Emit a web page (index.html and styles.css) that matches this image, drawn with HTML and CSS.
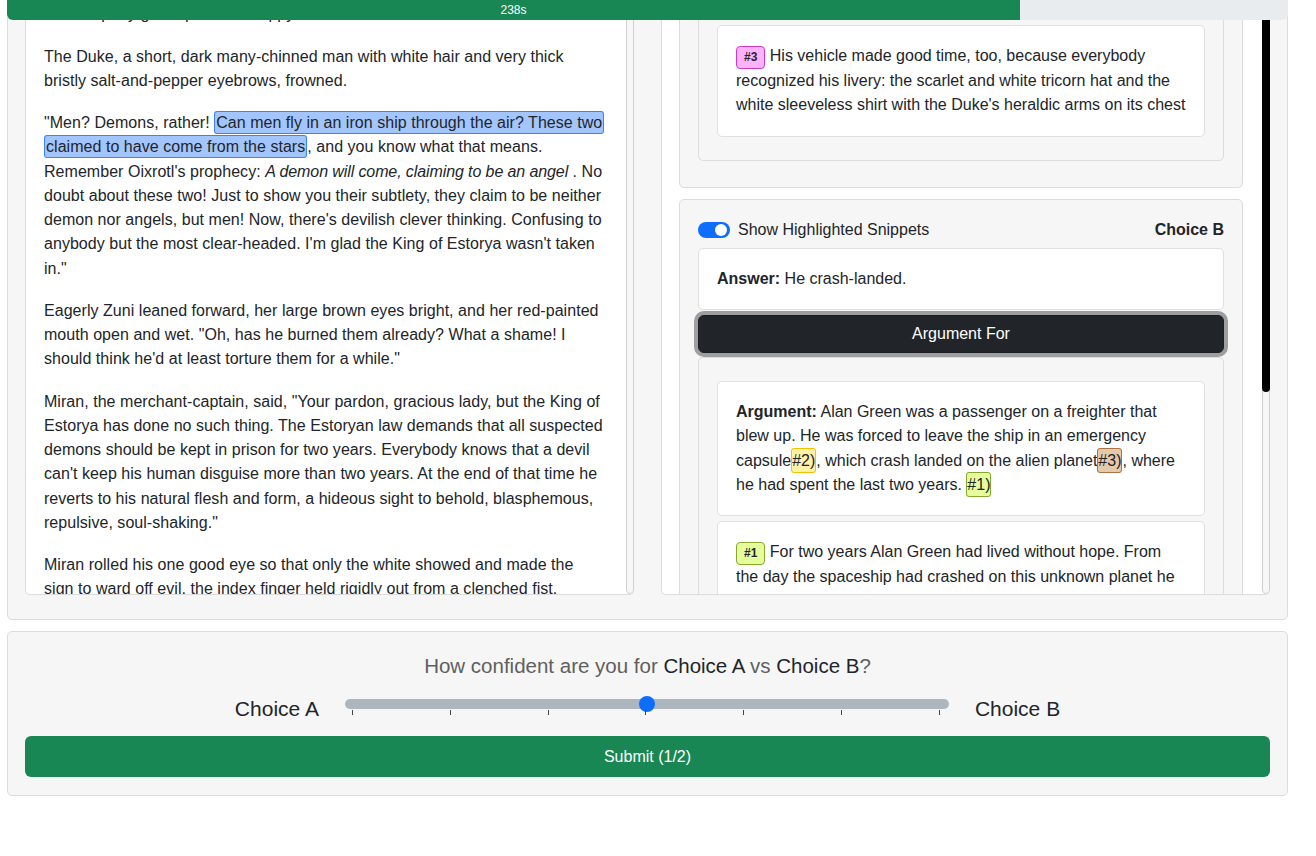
FILE: index.html
```html
<!DOCTYPE html>
<html lang="en">
<head>
  <meta charset="UTF-8">
  <meta name="viewport" content="width=device-width, initial-scale=1.0">
  <title>Debate Judging</title>
  <link rel="stylesheet" href="styles.css">
</head>
<body>

<div class="timer">
  <div class="timer-fill" style="width: 79.08%;">238s</div>
</div>

<div class="card main-card">
  <div class="panes">

    <div class="pane">
      <div class="pane-body story">
        <p>The captain bowed and told how the King kept the two strangers in prison, and the company grew quiet and happy.</p>
        <p>The Duke, a short, dark many-chinned man with white hair and very thick bristly salt-and-pepper eyebrows, frowned.</p>
        <p>"Men? Demons, rather! <span class="hl">Can men fly in an iron ship through the air? These two claimed to have come from the stars</span>, and you know what that means. Remember Oixrotl's prophecy: <i>A demon will come, claiming to be an angel</i> . No doubt about these two! Just to show you their subtlety, they claim to be neither demon nor angels, but men! Now, there's devilish clever thinking. Confusing to anybody but the most clear-headed. I'm glad the King of Estorya wasn't taken in."</p>
        <p>Eagerly Zuni leaned forward, her large brown eyes bright, and her red-painted mouth open and wet. "Oh, has he burned them already? What a shame! I should think he'd at least torture them for a while."</p>
        <p>Miran, the merchant-captain, said, "Your pardon, gracious lady, but the King of Estorya has done no such thing. The Estoryan law demands that all suspected demons should be kept in prison for two years. Everybody knows that a devil can't keep his human disguise more than two years. At the end of that time he reverts to his natural flesh and form, a hideous sight to behold, blasphemous, repulsive, soul-shaking."</p>
        <p>Miran rolled his one good eye so that only the white showed and made the sign to ward off evil, the index finger held rigidly out from a clenched fist.</p>
        <p>"And then they burn him," said the Duke with satisfaction.</p>
      </div>
      <div class="track"></div>
    </div>

    <div class="pane">
      <div class="pane-body answers">
        <div class="choice-card">
          <div class="evidence">
            <div class="box"><span class="tag tag-pink">#3</span> His vehicle made good time, too, because everybody recognized his livery: the scarlet and white tricorn hat and the white sleeveless shirt with the Duke's heraldic arms on its chest</div>
          </div>
        </div>

        <div class="choice-card">
          <div class="choice-head">
            <label class="switch"><span class="switch-input"></span>Show Highlighted Snippets</label>
            <b>Choice B</b>
          </div>
          <div class="box answer"><b>Answer:</b> He crash-landed.</div>
          <button class="btn-dark">Argument For</button>
          <div class="evidence">
            <div class="box"><b>Argument:</b> Alan Green was a passenger on a freighter that blew up. He was forced to leave the ship in an emergency capsule<span class="cite cite-yellow">#2)</span>, which crash landed on the alien planet<span class="cite cite-tan">#3)</span>, where he had spent the last two years. <span class="cite cite-lime">#1)</span></div>
            <div class="box"><span class="tag tag-lime">#1</span> For two years Alan Green had lived without hope. From the day the spaceship had crashed on this unknown planet he had only said to himself each night that rescue would come with the morning.</div>
          </div>
        </div>
      </div>
      <div class="track"><div class="thumb" style="height: 427px;"></div></div>
    </div>

  </div>
</div>

<div class="card confidence">
  <div class="question">How confident are you for <span>Choice A</span> vs <span>Choice B</span>?</div>
  <div class="slider-row">
    <span class="side">Choice A</span>
    <div class="slider">
      <input type="range" min="0" max="6" value="3">
      <div class="ticks"><i></i><i></i><i></i><i></i><i></i><i></i><i></i></div>
    </div>
    <span class="side">Choice B</span>
  </div>
  <button class="btn-submit">Submit (1/2)</button>
</div>

</body>
</html>
```

FILE: styles.css
```css
body {
  margin: 0;
  font-family: "Liberation Sans", Arial, sans-serif;
  font-size: 16px;
  line-height: 24.25px;
  color: #212529;
  background: #fff;
}
.timer {
  position: fixed;
  top: 0;
  left: 7px;
  width: 1281px;
  height: 20px;
  background: #e9ecef;
  border-radius: 0 0 6px 6px;
  overflow: hidden;
  z-index: 10;
}
.timer-fill {
  height: 100%;
  background: #198754;
  color: #fff;
  font-size: 12px;
  line-height: 20px;
  text-align: center;
}
.card {
  width: 1281px;
  margin-left: 7px;
  box-sizing: border-box;
  background: #f6f6f6;
  border: 1px solid #dcdcdc;
  border-radius: 5px;
}
.main-card {
  margin-top: -56px;
  padding: 18px 17px 24px;
}
.panes {
  display: grid;
  grid-template-columns: 1fr 1fr;
  gap: 27px;
}
.pane {
  display: flex;
  height: 630px;
  background: #fff;
  border: 1px solid #dcdcdc;
  border-right: 0;
  border-radius: 5px;
  overflow: hidden;
}
.pane-body {
  flex: 1;
  overflow: hidden;
}
.track {
  width: 8px;
  flex-shrink: 0;
  box-sizing: border-box;
  background: #f7f7f7;
  border: 1px solid #cfcfcf;
  border-radius: 4px;
}
.thumb {
  margin: 0 -1px;
  background: #000;
  border-radius: 4px;
}
.story {
  padding: 14px 20px 0 18px;
  letter-spacing: 0.04px;
}
.story p {
  margin: 0 0 18px;
}
.story i {
  letter-spacing: -0.1px;
}
.hl {
  background: #a3c5fd;
  border: 1px solid #3d82f5;
  border-radius: 3px;
  padding: 2px 1px;
  -webkit-box-decoration-break: clone;
  box-decoration-break: clone;
}
.answers {
  padding: 18px 19px 0 17px;
}
.choice-card {
  background: #f6f6f6;
  border: 1px solid #dcdcdc;
  border-radius: 5px;
  padding: 18px;
  margin-bottom: 11px;
}
.choice-head {
  display: flex;
  justify-content: space-between;
  align-items: center;
}
.switch {
  display: flex;
  align-items: center;
}
.switch-input {
  position: relative;
  width: 32px;
  height: 16px;
  margin-right: 8px;
  background: #0d6efd;
  border-radius: 8px;
}
.switch-input::after {
  content: "";
  position: absolute;
  top: 2px;
  right: 3px;
  width: 12px;
  height: 12px;
  border-radius: 50%;
  background: #fff;
}
.box {
  background: #fff;
  border: 1px solid #e0e0e0;
  border-radius: 5px;
  padding: 18px;
  margin: 5px 0;
}
.answer {
  margin: 6px 0 0;
}
.btn-dark {
  display: block;
  width: 100%;
  margin: 5px 0 4px;
  padding: 6px 12px;
  font-family: inherit;
  font-size: 16px;
  line-height: 24px;
  color: #fff;
  background: #212529;
  border: 1px solid #1a1e21;
  border-radius: 6px;
  box-shadow: 0 0 0 4px rgba(66, 70, 73, 0.5);
}
.evidence {
  margin-bottom: 8px;
  background: #f6f6f6;
  border: 1px solid #dcdcdc;
  border-radius: 5px;
  padding: 18px;
}
.tag {
  display: inline-block;
  font-size: 12px;
  font-weight: bold;
  line-height: 13px;
  padding: 4px 7px;
  border: 1px solid;
  border-radius: 4px;
}
.tag-pink { background: #fdb2fd; border-color: #cc3acc; }
.tag-lime { background: #e6fd9c; border-color: #86a82c; }
.cite {
  padding: 3px 0;
  border: 1px solid;
  border-radius: 3px;
}
.cite-yellow { background: #fff1a8; border-color: #f2c200; }
.cite-tan { background: #e6c8aa; border-color: #a8744a; }
.cite-lime { background: #e6fd9c; border-color: #86a82c; }

.confidence {
  margin-top: 11px;
  padding: 18px 17px;
}
.question {
  padding-top: 4px;
  text-align: center;
  font-size: 20.5px;
  line-height: 24px;
  color: #5f5f5f;
}
.question span {
  color: #212529;
}
.slider-row {
  display: flex;
  justify-content: center;
  align-items: center;
  gap: 26px;
  height: 34px;
  margin-top: 14px;
}
.side {
  font-size: 21px;
}
.slider {
  width: 604px;
  padding-bottom: 4px;
}
.slider input {
  -webkit-appearance: none;
  appearance: none;
  display: block;
  width: 100%;
  height: 10px;
  margin: 0;
  background: #adb5bd;
  border-radius: 5px;
  outline: none;
}
.slider input::-webkit-slider-thumb {
  -webkit-appearance: none;
  width: 16px;
  height: 16px;
  border-radius: 50%;
  background: #0d6efd;
  border: 0;
}
.ticks {
  display: flex;
  justify-content: space-between;
  height: 5px;
  margin-top: 1px;
  padding: 0 9px 0 7px;
}
.ticks i {
  width: 1px;
  background: #444;
}
.btn-submit {
  display: block;
  width: 100%;
  margin-top: 10px;
  padding: 8px 16px;
  font-family: inherit;
  font-size: 16px;
  line-height: 25px;
  color: #fff;
  background: #198754;
  border: 0;
  border-radius: 6px;
}
```
